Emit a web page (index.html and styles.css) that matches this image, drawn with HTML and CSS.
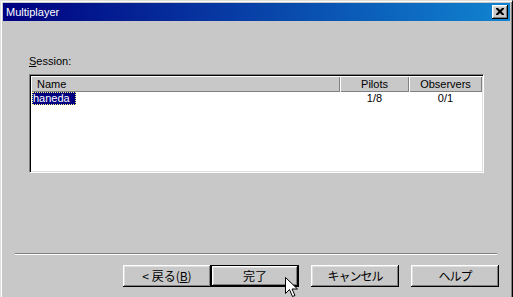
FILE: index.html
```html
<!DOCTYPE html>
<html lang="ja">
<head>
    <meta charset="UTF-8">
    <title>Multiplayer</title>
    <link rel="stylesheet" href="styles.css">
</head>
<body>
    <div class="window">
        <!-- title bar -->
        <div class="titlebar">
            <span class="title">Multiplayer</span>
            <div class="close_btn">
                <svg width="8" height="7" viewBox="0 0 8 7"><path d="M0 0h2l2 2 2-2h2v1l-2.5 2.5 2.5 2.5v1h-2l-2-2-2 2h-2v-1l2.5-2.5-2.5-2.5z" fill="#000"/></svg>
            </div>
        </div>
        <div class="client">
            <div class="label"><u>S</u>ession:</div>
            <div class="listbox">
                <div class="list_head">
                    <div class="hcell hcell_left">Name</div>
                    <div class="hcell">Pilots</div>
                    <div class="hcell">Observers</div>
                </div>
                <div class="list_row">
                    <div class="cell cell_left"><span class="sel">haneda</span></div>
                    <div class="cell">1/8</div>
                    <div class="cell">0/1</div>
                </div>
            </div>
            <div class="separator"></div>
            <div class="buttons">
                <button class="btn">&lt;&nbsp;戻る(<u>B</u>)</button>
                <button class="btn btn_default">完了</button>
                <button class="btn btn_gap narrow">キャンセル</button>
                <button class="btn btn_gap narrow">ヘルプ</button>
            </div>
        </div>
        <!-- mouse pointer -->
        <svg class="pointer" width="13" height="21" viewBox="0 0 13 21"><path d="M0.5 0.5v16l4-4 3 7 2.5-1-3-6.5h5.5z" fill="#fff" stroke="#000" stroke-width="1"/></svg>
    </div>
</body>
</html>
```

FILE: styles.css
```css
*{
    box-sizing: border-box;
}
body{
    margin: 0;
    background-color: #c8c8c8;
    font-family: "Liberation Sans", Arial, sans-serif;
    font-size: 11px;
    color: #000;
}
.window{
    position: relative;
    width: 513px;
    height: 297px;
    overflow: hidden;
    padding: 2px;
    border-top: 1px solid #dfdfdf;
    border-left: 1px solid #dfdfdf;
    border-right: 1px solid #000;
    box-shadow: inset 1px 1px #fff, inset -1px 0 #808080;
    background-color: #c8c8c8;
}
.titlebar{
    display: flex;
    align-items: center;
    justify-content: space-between;
    height: 18px;
    padding: 0 2px 0 3px;
    background: linear-gradient(to right, #000080, #1084d0);
    color: #fff;
}
.title{
    font-size: 11px;
    line-height: 13px;
}
.close_btn{
    display: flex;
    align-items: center;
    justify-content: center;
    width: 16px;
    height: 14px;
    background-color: #c8c8c8;
    box-shadow: inset -1px -1px #000, inset 1px 1px #fff, inset -2px -2px #808080, inset 2px 2px #dfdfdf;
}
.close_btn>svg{
    display: block;
    margin: 0 1px 1px 0;
}
.label{
    margin: 34px 0 0 26px;
    height: 13px;
    line-height: 13px;
}
.listbox{
    width: 455px;
    height: 99px;
    margin: 6px 0 0 26px;
    padding: 1px;
    background-color: #fff;
    border: 1px solid;
    border-color: #808080 #fff #fff #808080;
    box-shadow: inset 1px 1px #000, inset -1px -1px #dfdfdf;
}
.list_head,
.list_row{
    display: grid;
    grid-template-columns: 309px 69px 73px;
}
.hcell{
    height: 16px;
    line-height: 16px;
    text-align: center;
    background-color: #c8c8c8;
    box-shadow: inset 1px 1px #fff, inset -1px -1px #808080;
}
.hcell_left{
    text-align: left;
    padding-left: 6px;
}
.cell{
    height: 13px;
    line-height: 13px;
    text-align: center;
}
.cell_left{
    text-align: left;
    padding-left: 1px;
}
.sel{
    display: inline-block;
    padding: 0 6px 0 1px;
    background-color: #000080;
    color: #fff;
    outline: 1px dotted #ffff80;
    outline-offset: -1px;
}
.separator{
    height: 2px;
    margin: 80px 13px 0 12px;
    border-top: 1px solid #808080;
    border-bottom: 1px solid #fff;
}
.buttons{
    display: flex;
    margin-top: 10px;
    padding-left: 120px;
}
.btn{
    width: 88px;
    height: 22px;
    padding: 0;
    border: none;
    background-color: #c8c8c8;
    font-family: "Noto Sans CJK JP", sans-serif;
    font-size: 12px;
    line-height: 14px;
    color: #000;
    box-shadow: inset -1px -1px #000, inset 1px 1px #fff, inset -2px -2px #808080, inset 2px 2px #dfdfdf;
}
.btn_default{
    border: 1px solid #000;
}
.btn_gap{
    margin-left: 12px;
}
.narrow{
    letter-spacing: -1px;
}
.pointer{
    position: absolute;
    left: 284px;
    top: 276px;
}
```
